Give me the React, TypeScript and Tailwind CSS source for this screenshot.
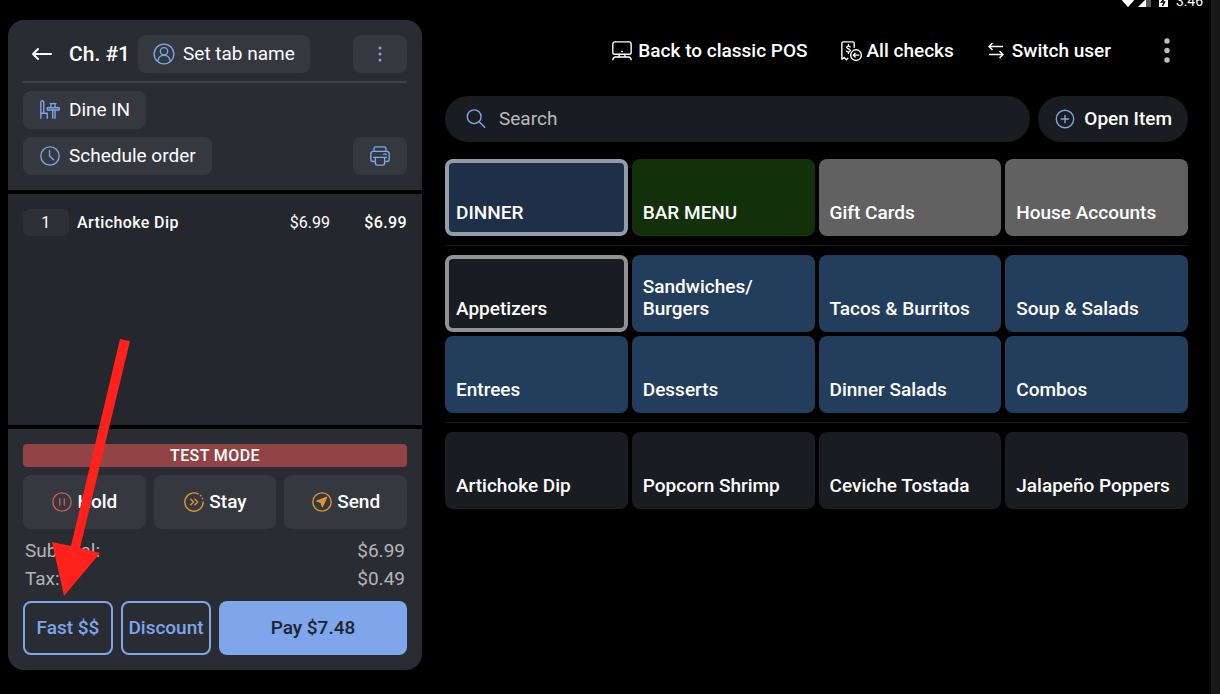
import type { ReactNode } from 'react'
import { clsx } from 'clsx'

type TileColor = 'navy' | 'green' | 'gray' | 'blue' | 'dark'

interface Tile {
  label: string
  color: TileColor
  selected?: boolean
}

const MENUS: Tile[] = [
  { label: 'DINNER', color: 'navy', selected: true },
  { label: 'BAR MENU', color: 'green' },
  { label: 'Gift Cards', color: 'gray' },
  { label: 'House Accounts', color: 'gray' },
]

const CATEGORIES: Tile[] = [
  { label: 'Appetizers', color: 'dark', selected: true },
  { label: 'Sandwiches/ Burgers', color: 'blue' },
  { label: 'Tacos & Burritos', color: 'blue' },
  { label: 'Soup & Salads', color: 'blue' },
  { label: 'Entrees', color: 'blue' },
  { label: 'Desserts', color: 'blue' },
  { label: 'Dinner Salads', color: 'blue' },
  { label: 'Combos', color: 'blue' },
]

const ITEMS: Tile[] = [
  { label: 'Artichoke Dip', color: 'dark' },
  { label: 'Popcorn Shrimp', color: 'dark' },
  { label: 'Ceviche Tostada', color: 'dark' },
  { label: 'Jalapeño Poppers', color: 'dark' },
]

export default function App() {
  return (
    <div className="relative min-h-screen flex items-stretch bg-black border-r-[9px] border-[#181818] font-[Roboto,sans-serif] text-[19px] leading-6 text-white">
      <CheckPanel />
      <div className="flex-1 min-w-0 flex flex-col pl-[23px]">
        <StatusBar />
        <main className="pr-[23px]">
          <TopNav />
          <div className="flex gap-2 mt-[26px]">
            <label className="flex-1 min-w-0 flex items-center gap-3 h-[46px] px-5 rounded-full bg-[#191c20]">
              <Icon className="size-[22px] text-[#7fa6ea]">
                <circle cx="10" cy="9.500" r="7.500" />
                <path d="M15.500 15l6 6" />
              </Icon>
              <input
                type="search"
                aria-label="Search"
                placeholder="Search"
                className="flex-1 min-w-0 bg-transparent outline-none placeholder:text-[#b9bbbe]"
              />
            </label>
            <button type="button" className="flex items-center gap-2 h-[46px] px-4 rounded-full bg-[#191c20] font-medium">
              <Icon className="size-[22px] text-[#7fa6ea]">
                <circle cx="12" cy="12" r="9.5" />
                <path d="M12 8v8M8 12h8" />
              </Icon>
              Open Item
            </button>
          </div>
          <TileGrid tiles={MENUS} className="mt-[17px]" />
          <hr className="my-[9px] border-[#1a1a1a]" />
          <TileGrid tiles={CATEGORIES} />
          <hr className="my-[9px] border-[#1a1a1a]" />
          <TileGrid tiles={ITEMS} />
        </main>
      </div>
      <PointerArrow />
    </div>
  )
}

function CheckPanel() {
  return (
    <aside className="w-[414px] shrink-0 flex flex-col gap-1 mt-5 mb-6 ml-2 rounded-2xl overflow-hidden">
      <header className="bg-[#292c33] p-[15px]">
        <div className="flex items-center pb-2 border-b-2 border-[#3d4047]">
          <button type="button" aria-label="Back" className="w-[46px] pl-2">
            <svg viewBox="0 0 22 14" fill="none" stroke="currentColor" strokeWidth="2" strokeLinecap="round" strokeLinejoin="round" className="w-[22px] h-[14px]">
              <path d="M20 7H2M7 2L2 7l5 5" />
            </svg>
          </button>
          <h1 className="text-[21px] font-medium mr-2">Ch. #1</h1>
          <PanelButton className="px-[15px]">
            <Icon className="size-[22px] text-[#7fa6ea]">
              <circle cx="12" cy="12" r="10.8" />
              <circle cx="12" cy="9" r="4" />
              <path d="M5.500 19c.4-3.600 3-5.500 6.500-5.500s6.100 1.900 6.500 5.500" />
            </Icon>
            Set tab name
          </PanelButton>
          <PanelButton label="Check options" className="w-[54px] justify-center ml-auto">
            <svg viewBox="0 0 4 16" fill="#7fa6ea" className="w-1 h-4">
              <circle cx="2" cy="2" r="1.500" />
              <circle cx="2" cy="8" r="1.500" />
              <circle cx="2" cy="14" r="1.500" />
            </svg>
          </PanelButton>
        </div>
        <div className="flex flex-col items-start gap-2 mt-2">
          <PanelButton className="px-4">
            <Icon className="size-[22px] text-[#7fa6ea]">
              <path d="M2 21V3.500a1.600 1.600 0 0 1 3.200 0V14M2 15.500h7V21M5.200 4v10.500" />
              <path d="M9 9.500h13v2.500H9zM13 9.500V5h4.500v4.500M12 5h6.500M15 12v9M17.500 12v9" />
            </Icon>
            Dine IN
          </PanelButton>
          <div className="flex justify-between w-full">
            <PanelButton className="px-4">
              <Icon className="size-[22px] text-[#7fa6ea]">
                <circle cx="12" cy="12" r="10" />
                <path d="M11.500 6v6l4.500 4" />
              </Icon>
              Schedule order
            </PanelButton>
            <PanelButton label="Print" className="w-[54px] justify-center">
              <Icon className="size-[22px] text-[#7fa6ea]">
                <path d="M5.500 7V4a2 2 0 0 1 2-2h9a2 2 0 0 1 2 2v3" />
                <path d="M7 18H4.500A2.500 2.500 0 0 1 2 15.500v-6A2.500 2.500 0 0 1 4.500 7h15A2.500 2.500 0 0 1 22 9.500v6a2.500 2.500 0 0 1-2.500 2.500H17" />
                <path d="M5 13.500h14M7 13.500V20a2 2 0 0 0 2 2h6a2 2 0 0 0 2-2v-6.500M16 10h3" />
              </Icon>
            </PanelButton>
          </div>
        </div>
      </header>

      <section aria-label="Order items" className="flex-1 bg-[#24272d] p-[15px]">
        <table className="w-full text-base font-medium tracking-wide">
          <tbody>
            <tr>
              <td className="w-[46px] h-[27px] rounded-md bg-[#2d3036] text-center font-normal">1</td>
              <td className="pl-2">Artichoke Dip</td>
              <td className="text-right font-normal tracking-normal">$6.99</td>
              <td className="w-[77px] text-right">$6.99</td>
            </tr>
          </tbody>
        </table>
      </section>

      <footer className="bg-[#292c33] p-[15px]">
        <p className="h-[23px] rounded-sm bg-[#914345] text-center text-base leading-6 font-medium tracking-wide">TEST MODE</p>
        <div className="grid grid-cols-3 gap-2 mt-2">
          <ActionButton label="Hold">
            <Icon className="size-[22px] text-[#c65a58]">
              <circle cx="12" cy="12" r="10" />
              <path d="M9.500 8.500v7M14.500 8.500v7" />
            </Icon>
          </ActionButton>
          <ActionButton label="Stay">
            <Icon className="size-[22px] text-[#e2942f]">
              <path d="M16.500 3.100A10 10 0 1 0 22 12M19 5l.3.300M21.200 8l.2.400" />
              <path d="M8.500 9l3 3-3 3M13 9l3 3-3 3" />
            </Icon>
          </ActionButton>
          <ActionButton label="Send">
            <Icon className="size-[22px] text-[#e2942f]">
              <circle cx="12" cy="12" r="10" />
              <path d="M17 7l-4.500 10-1.500-4.500L6.500 11z" fill="currentColor" />
            </Icon>
          </ActionButton>
        </div>
        <dl className="grid grid-cols-2 gap-y-1 mt-[10px] px-[2px] text-[#b3b5b8]">
          <dt>Subtotal:</dt>
          <dd className="text-right">$6.99</dd>
          <dt>Tax:</dt>
          <dd className="text-right">$0.49</dd>
        </dl>
        <div className="flex gap-2 mt-[10px]">
          <button type="button" className="w-[90px] h-[54px] rounded-lg border-2 border-[#7fa6ea] font-medium text-[#7fa6ea]">Fast $$</button>
          <button type="button" className="w-[90px] h-[54px] rounded-lg border-2 border-[#7fa6ea] font-medium text-[#7fa6ea]">Discount</button>
          <button type="button" className="flex-1 h-[54px] rounded-lg bg-[#7fa6ea] font-medium text-[#1c232e]">Pay $7.48</button>
        </div>
      </footer>
    </aside>
  )
}

// Sits half above the top edge of the screen, so its content hangs from the bottom
function StatusBar() {
  return (
    <div className="flex items-end justify-end h-[10px] pr-2 overflow-hidden text-sm leading-[18px]">
      <svg viewBox="0 0 46 18" className="w-[46px] h-[18px] mr-2">
        <path d="M0 8.500C3 5 9 5 12 8.500L6 15z" fill="#fff" />
        <path d="M16 15L28 3v12z" fill="#fff" />
        <path d="M24 7l5-4v12h-5z" fill="#555" />
        <path d="M37 4h9v11h-9z" fill="#fff" />
        <path d="M43.500 5l-4 5h3l-2 4" stroke="#000" strokeWidth="1.500" fill="none" />
      </svg>
      <span>3:46</span>
    </div>
  )
}

function TopNav() {
  return (
    <nav className="flex items-center justify-end h-[38px] mt-[22px] font-medium">
      <a href="#classic" className="flex items-center gap-[5px] mr-8">
        <Icon className="size-[22px]">
          <path d="M4 15.500c-1.200 0-2-1-2-2V4.500A2.500 2.500 0 0 1 4.500 2h15A2.500 2.500 0 0 1 22 4.500v9c0 1-.8 2-2 2zM11.500 12.500h1" />
          <path d="M9.500 15.500L8 18.500M14.500 15.500l1.500 3M2 21.500c.3-2 1.300-3 3-3h14c1.700 0 2.700 1 3 3" />
        </Icon>
        Back to classic POS
      </a>
      <a href="#checks" className="flex items-center gap-[5px] mr-[34px]">
        <Icon className="size-[22px]">
          <path d="M15.500 8V3.500A1.500 1.500 0 0 0 14 2H3.500A1.500 1.500 0 0 0 2 3.500V21l2.500-2L7 21.500 8.500 20" />
          <path d="M11 7.500C10.500 6.500 7.500 6 7.300 8c0 2 3.900 1.500 3.900 3.500 0 2-3.500 1.800-4.200.5M9.200 5v1.500M9.200 13v1.500" />
          <circle cx="17.500" cy="16.500" r="5.800" />
          <path d="M20.500 16.500h-6M16.500 14.500l-2 2 2 2" />
        </Icon>
        All checks
      </a>
      <a href="#user" className="flex items-center gap-2">
        <svg viewBox="0 0 16 18" fill="none" stroke="currentColor" strokeWidth="1.500" className="w-4 h-[18px]">
          <path d="M15 4.500H1M4.500 1L1 4.500 4.500 8M1 12.500h14M11.500 9l3.500 3.500-3.500 3.500" />
        </svg>
        Switch user
      </a>
      <button type="button" aria-label="More options" className="w-[43px] flex justify-center ml-[34px]">
        <svg viewBox="0 0 6 26" fill="#bdbdbd" className="w-[6px] h-[26px]">
          <circle cx="3" cy="3" r="2.700" />
          <circle cx="3" cy="12.500" r="2.700" />
          <circle cx="3" cy="22" r="2.700" />
        </svg>
      </button>
    </nav>
  )
}

function TileGrid({ tiles, className }: { tiles: Tile[]; className?: string }) {
  const colorMap: Record<TileColor, string> = {
    navy:  'bg-[#1e2f47]',
    green: 'bg-[#12300a]',
    gray:  'bg-[#616161]',
    blue:  'bg-[#233e5d]',
    dark:  'bg-[#191c20]',
  }
  return (
    <div className={clsx('grid grid-cols-4 gap-1', className)}>
      {tiles.map((t) => (
        <button
          key={t.label}
          type="button"
          className={clsx(
            'flex items-end h-[77px] px-[7px] pb-2 rounded-lg border-4 text-left font-medium leading-[22px]',
            colorMap[t.color],
            !t.selected && 'border-transparent',
            t.selected && (t.color === 'navy' ? 'border-[#929dab]' : 'border-[#8f9193]'),
          )}
        >
          {t.label}
        </button>
      ))}
    </div>
  )
}

function PanelButton({ label, className, children }: { label?: string; className?: string; children: ReactNode }) {
  return (
    <button type="button" aria-label={label} className={clsx('flex items-center gap-2 h-[38px] rounded-lg bg-[#35383f]', className)}>
      {children}
    </button>
  )
}

function ActionButton({ label, children }: { label: string; children: ReactNode }) {
  return (
    <button type="button" className="flex items-center justify-center gap-1 h-[54px] rounded-lg bg-[#35383f] font-medium">
      {children}
      {label}
    </button>
  )
}

function Icon({ className, children }: { className?: string; children: ReactNode }) {
  return (
    <svg viewBox="0 0 24 24" fill="none" stroke="currentColor" strokeWidth="1.500" strokeLinecap="round" strokeLinejoin="round" className={clsx('shrink-0', className)}>
      {children}
    </svg>
  )
}

// Callout pointing at the fast cash button
function PointerArrow() {
  return (
    <svg viewBox="0 0 80 257" fill="#ff211c" className="absolute left-[51px] top-[339px] w-[80px] h-[257px] pointer-events-none">
      <path d="M69 0l10 2-50 207 20 5-36 43L1 203l19 4z" />
    </svg>
  )
}
